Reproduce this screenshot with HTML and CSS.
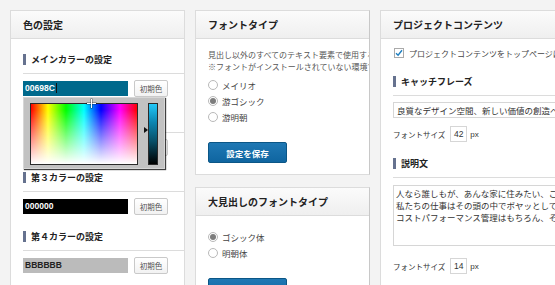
FILE: index.html
```html
<!DOCTYPE html>
<html lang="ja">
<head>
<meta charset="UTF-8">
<meta name="viewport" content="width=device-width, initial-scale=1.0">
<title>テーマ設定</title>
<link rel="stylesheet" href="styles.css">
</head>
<body>
<div class="board">
  <div class="column col-color">
    <div class="panel panel-open">
      <div class="panel-head">色の設定</div>
      <div class="panel-body">
        <div class="field">
          <h3 class="sub">メインカラーの設定</h3>
          <div class="color-row">
            <div class="swatch swatch-main">00698C<span class="caret"></span></div>
            <button class="reset">初期色</button>
            <div class="picker">
              <div class="picker-square"><span class="picker-cross"></span></div>
              <span class="picker-arrow"></span>
              <div class="picker-strip"></div>
            </div>
          </div>
        </div>
        <div class="field">
          <h3 class="sub">第２カラーの設定</h3>
          <div class="color-row">
            <div class="swatch swatch-sub">FFFFFF</div>
            <button class="reset">初期色</button>
          </div>
        </div>
        <div class="field">
          <h3 class="sub">第３カラーの設定</h3>
          <div class="color-row">
            <div class="swatch swatch-black">000000</div>
            <button class="reset">初期色</button>
          </div>
        </div>
        <div class="field">
          <h3 class="sub">第４カラーの設定</h3>
          <div class="color-row">
            <div class="swatch swatch-gray">BBBBBB</div>
            <button class="reset">初期色</button>
          </div>
        </div>
      </div>
    </div>
  </div>

  <div class="column col-font">
    <div class="panel">
      <div class="panel-head">フォントタイプ</div>
      <div class="panel-body">
        <p class="note">見出し以外のすべてのテキスト要素で使用するフォントを選択してください。<br>※フォントがインストールされていない環境では代替フォントで表示されます。</p>
        <ul class="choices">
          <li><span class="radio"></span>メイリオ</li>
          <li><span class="radio checked"></span>游ゴシック</li>
          <li><span class="radio"></span>游明朝</li>
        </ul>
        <button class="save">設定を保存</button>
      </div>
    </div>
    <div class="panel">
      <div class="panel-head">大見出しのフォントタイプ</div>
      <div class="panel-body tight">
        <ul class="choices">
          <li><span class="radio checked"></span>ゴシック体</li>
          <li><span class="radio"></span>明朝体</li>
        </ul>
        <button class="save">設定を保存</button>
      </div>
    </div>
  </div>

  <div class="column col-project">
    <div class="panel panel-open">
      <div class="panel-head">プロジェクトコンテンツ</div>
      <div class="panel-body tight">
        <label class="check-row">
          <span class="checkbox">
            <svg width="8" height="8" viewBox="0 0 8 8"><path d="M1 4.2 L3.1 6.3 L7 1.2" fill="none" stroke="#1e7fc0" stroke-width="1.4"/></svg>
          </span>
          プロジェクトコンテンツをトップページに表示する
        </label>
        <div class="field">
          <h3 class="sub">キャッチフレーズ</h3>
          <div class="text-box">良質なデザイン空間、新しい価値の創造へ</div>
          <div class="size-row">フォントサイズ<span class="num-box">42</span><span class="unit">px</span></div>
        </div>
        <div class="field">
          <h3 class="sub">説明文</h3>
          <div class="area-box">人なら誰しもが、あんな家に住みたい、こんな暮らしがしたいという想いを持っています。<br>私たちの仕事はその頭の中でボヤッとしているイメージを形にすることです。<br>コストパフォーマンス管理はもちろん、その先の暮らしまで考えます。</div>
          <div class="size-row size-last">フォントサイズ<span class="num-box">14</span><span class="unit">px</span></div>
        </div>
      </div>
    </div>
  </div>
</div>
</body>
</html>
```

FILE: styles.css
```css
*{
    margin: 0;
    padding: 0;
    box-sizing: border-box;
}
body{
    background: #f3f3f3;
    font-family: "Liberation Sans", "Noto Sans CJK JP", sans-serif;
    color: #333;
    overflow: hidden;
}
.board{
    display: flex;
    align-items: flex-start;
    gap: 10px;
    padding: 10px;
    width: max-content;
}
.column{
    display: flex;
    flex-direction: column;
    gap: 12px;
}
.col-color, .col-font{ width: 175px; }
.col-project{ width: 240px; }
.col-font .panel{ border-right-color: #c8c8c8; }

.panel{
    background: #fff;
    border: 1px solid #dcdcdc;
    overflow: hidden;
}
.panel-open{ height: 300px; }
.panel-head{
    height: 28px;
    line-height: 27px;
    padding-left: 12px;
    font-family: "Noto Sans CJK JP", sans-serif;
    font-size: 10px;
    font-weight: bold;
    color: #222;
    background: linear-gradient(#fbfbfb, #efefef);
    border-bottom: 1px solid #dcdcdc;
}
.panel-body{
    padding: 15px 0 11px 12px;
}
.panel-body.tight{ padding-top: 8px; }

/* section heading */
.sub{
    font-family: "Noto Sans CJK JP", sans-serif;
    font-size: 9px;
    line-height: 12px;
    font-weight: bold;
    color: #222;
    padding-bottom: 7px;
    margin-bottom: 6px;
    border-bottom: 1px solid #dcdcdc;
    white-space: nowrap;
}
.sub::before{
    content: "";
    display: inline-block;
    width: 3px; height: 11px;
    background: #66728f;
    margin-right: 5px;
    vertical-align: -2px;
}
.field + .field{ margin-top: 16px; }

/* colour rows */
.color-row{
    position: relative;
    display: flex;
    align-items: center;
    gap: 6px;
    height: 17px;
}
.swatch{
    width: 105px; height: 15px;
    line-height: 15px;
    padding-left: 2px;
    font-size: 8.5px;
    font-weight: bold;
    color: #fff;
}
.swatch-main{ background: #00698c; }
.swatch-sub{ background: #fff; color: #333; border: 1px solid #ddd; }
.swatch-black{ background: #000; }
.swatch-gray{ background: #bbb; color: #222; }
.caret{
    display: inline-block;
    width: 1px; height: 10px;
    background: #111;
    margin-left: 1px;
    vertical-align: -2px;
}
.reset{
    width: 34px; height: 17px;
    font-family: "Noto Sans CJK JP", sans-serif;
    font-size: 7.5px;
    color: #555;
    background: linear-gradient(#fff, #f2f2f2);
    border: 1px solid #c9c9c9;
    border-radius: 2px;
}

/* colour picker popup */
.picker{
    position: absolute;
    left: 0; top: 17px;
    z-index: 2;
    display: flex;
    gap: 10px;
    width: 142px; height: 72px;
    padding: 5px 6px;
    background: #c2c2c2;
    border: 1px solid #d6d6d6;
    box-shadow: 1px 1px 1px rgba(0,0,0,.75);
}
.picker-square{
    position: relative;
    width: 109px; height: 62px;
    border: 1px solid #2a2a2a;
    background:
        linear-gradient(rgba(255,255,255,0) 10%, #fff),
        linear-gradient(to right, #f00, #ff0 16%, #0f0 33%, #0ff 50%, #00f 66%, #f0f 84%, #f00);
}
.picker-cross{
    position: absolute;
    left: 56px; top: -5px;
    width: 9px; height: 9px;
}
.picker-cross::before, .picker-cross::after{
    content: "";
    position: absolute;
    background: #fff;
    box-shadow: 0 0 0 0.5px rgba(0,0,0,.5);
}
.picker-cross::before{ left: 0; top: 4px; width: 9px; height: 1px; }
.picker-cross::after{ left: 4px; top: 0; width: 1px; height: 9px; }
.picker-arrow{
    position: absolute;
    left: 120px; top: 29px;
    border-left: 4px solid #111;
    border-top: 3px solid transparent;
    border-bottom: 3px solid transparent;
}
.picker-strip{
    width: 10px; height: 62px;
    border: 1px solid #2a2a2a;
    background: linear-gradient(#22c8f8, #0b86b2 30%, #074f68 62%, #000);
}

/* font panels */
.note{
    font-family: "Noto Sans CJK JP", sans-serif;
    font-size: 8px;
    line-height: 11.5px;
    color: #555;
    white-space: nowrap;
    margin-top: -5px;
}
.choices{
    list-style: none;
    margin-top: 5px;
    font-family: "Noto Sans CJK JP", sans-serif;
    font-size: 8.5px;
    color: #444;
}
.choices li{
    display: flex;
    align-items: center;
    height: 16px;
    gap: 4px;
}
.radio{
    width: 10px; height: 10px;
    border: 1px solid #b9b9b9;
    border-radius: 50%;
    background: #fff;
    display: flex;
    align-items: center;
    justify-content: center;
}
.radio.checked::after{
    content: "";
    width: 6px; height: 6px;
    border-radius: 50%;
    background: #7d7d7d;
}
.save{
    display: block;
    margin-top: 17px;
    width: 79px; height: 21px;
    font-family: "Noto Sans CJK JP", sans-serif;
    font-size: 8.5px;
    font-weight: bold;
    color: #fff;
    background: linear-gradient(#1f78b4, #0f65a0);
    border: 1px solid #0b5686;
    border-radius: 2px;
}

/* project panel */
.check-row{
    display: flex;
    align-items: center;
    gap: 5px;
    height: 12px;
    font-family: "Noto Sans CJK JP", sans-serif;
    font-size: 8px;
    color: #444;
    white-space: nowrap;
    margin-bottom: 17px;
}
.checkbox{
    width: 10px; height: 10px;
    margin-left: 1px;
    border: 1px solid #aaa;
    background: #fff;
    display: flex;
    align-items: center;
    justify-content: center;
}
.text-box, .area-box{
    font-family: "Noto Sans CJK JP", sans-serif;
    font-size: 8.5px;
    color: #333;
    border: 1px solid #d6d6d6;
    white-space: nowrap;
    width: 260px;
}
.text-box{
    height: 16px;
    line-height: 14px;
    padding-left: 3px;
}
.area-box{
    height: 61px;
    line-height: 12px;
    padding: 1px 2px;
    margin-top: 7px;
}
.size-row{
    display: flex;
    align-items: center;
    margin-top: 8px;
    font-family: "Noto Sans CJK JP", sans-serif;
    font-size: 7.5px;
    color: #333;
}
.size-last{ margin-top: 12px; }
.num-box{
    width: 17px; height: 16px;
    line-height: 14px;
    margin-left: 5px;
    text-align: center;
    font-family: "Liberation Sans", sans-serif;
    font-size: 8.5px;
    border: 1px solid #d6d6d6;
}
.unit{
    margin-left: 3px;
    font-family: "Liberation Sans", sans-serif;
    font-size: 8px;
}
```
